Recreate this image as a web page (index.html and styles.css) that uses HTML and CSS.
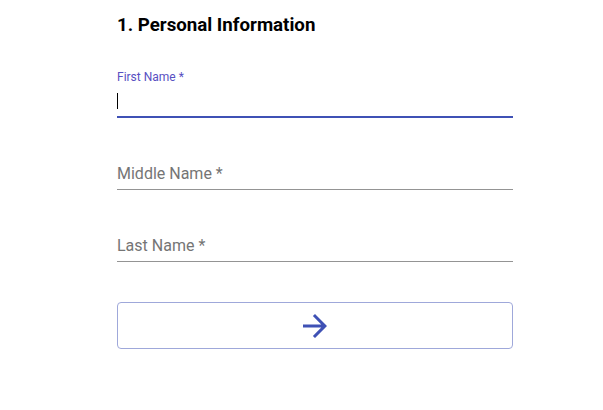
FILE: index.html
```html
<!DOCTYPE html>
<html>
<head>
<meta charset="utf-8">
<link rel="stylesheet" href="styles.css">
</head>
<body>
<div class="form">
  <h2 class="title">1. Personal Information</h2>
  <div class="field focused">
    <div class="label">First Name *</div>
    <div class="input-row"><span class="caret"></span></div>
  </div>
  <div class="field">
    <div class="input-row"><span class="placeholder">Middle Name *</span></div>
  </div>
  <div class="field">
    <div class="input-row"><span class="placeholder">Last Name *</span></div>
  </div>
  <div class="button">
    <svg class="arrow" viewBox="0 0 24 24" width="36" height="36"><path d="M12 4l-1.41 1.41L16.17 11H4v2h12.17l-5.58 5.59L12 20l8-8z" fill="#3f51b5"/></svg>
  </div>
</div>
</body>
</html>
```
FILE: styles.css
```css
html, body {
  margin: 0;
  padding: 0;
  background: #fff;
}
body {
  font-family: Roboto, "Liberation Sans", sans-serif;
}
.form {
  width: 396px;
  margin-left: 117px;
  padding-top: 13px;
}
.title {
  margin: 0 0 9px 0;
  font-size: 18.7px;
  line-height: 24px;
  font-weight: 700;
  color: #000;
}
.field {
  height: 72px;
  display: flex;
  flex-direction: column;
  justify-content: flex-end;
}
.label {
  font-size: 12px;
  line-height: 14px;
  color: #5850c2;
  margin-bottom: 7px;
}
.input-row {
  height: 19px;
  line-height: 19px;
  font-size: 16px;
  padding-bottom: 6px;
  border-bottom: 1px solid #949494;
}
.focused .input-row {
  border-bottom: 2px solid #3f51b5;
}
.caret {
  display: block;
  width: 1px;
  height: 16px;
  margin-top: 2px;
  background: #000;
}
.placeholder {
  color: #757575;
}
.button {
  margin-top: 40px;
  height: 47px;
  box-sizing: border-box;
  border: 1px solid #9fa8da;
  border-radius: 4px;
  display: flex;
  align-items: center;
  justify-content: center;
}
.arrow {
  display: block;
}
```
